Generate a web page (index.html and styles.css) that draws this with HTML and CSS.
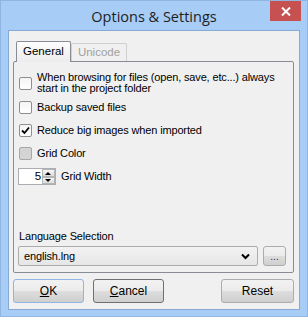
FILE: index.html
```html
<!DOCTYPE html>
<html>
<head>
<meta charset="utf-8">
<link rel="stylesheet" href="styles.css">
</head>
<body>
<div class="window">
  <div class="titlebar">
    <span class="title">Options &amp; Settings</span>
    <div class="close"><svg width="10" height="9" viewBox="0 0 10 9"><path d="M1 0.5 L9 8.5 M9 0.5 L1 8.5" stroke="#fff" stroke-width="2"/></svg></div>
  </div>
  <div class="client">
    <div class="tabs">
      <div class="tab active">General</div>
      <div class="tab">Unicode</div>
    </div>
    <div class="panel">
      <div class="row row-two">
        <span class="cb"></span>
        <span class="label">When browsing for files (open, save, etc...) always<br>start in the project folder</span>
      </div>
      <div class="row">
        <span class="cb"></span>
        <span class="label">Backup saved files</span>
      </div>
      <div class="row">
        <span class="cb checked"><svg width="9" height="9" viewBox="0 0 9 9"><path d="M1 4.5 L3.5 7 L8 1.5" stroke="#000" stroke-width="1.8" fill="none"/></svg></span>
        <span class="label">Reduce big images when imported</span>
      </div>
      <div class="row">
        <span class="cb grayed"></span>
        <span class="label">Grid Color</span>
      </div>
      <div class="row">
        <span class="spin"><span class="spin-val">5</span><span class="spin-btns"><span class="sb up"></span><span class="sb down"></span></span></span>
        <span class="label">Grid Width</span>
      </div>
      <div class="spacer"></div>
      <div class="lang-label">Language Selection</div>
      <div class="lang-row">
        <div class="select"><span>english.lng</span><svg width="9" height="7" viewBox="0 0 9 7"><path d="M1 1.5 L4.5 5 L8 1.5" stroke="#000" stroke-width="2" fill="none"/></svg></div>
        <div class="btn small">...</div>
      </div>
    </div>
    <div class="buttons">
      <div class="btn ok"><u>O</u>K</div>
      <div class="btn cancel"><u>C</u>ancel</div>
      <div class="grow"></div>
      <div class="btn reset">Reset</div>
    </div>
  </div>
</div>
</body>
</html>
```
FILE: styles.css
```css
* { box-sizing: border-box; }
html, body { margin: 0; padding: 0; }
body { width: 308px; height: 317px; overflow: hidden; background: #a7cdf6; }
.window { width: 308px; height: 317px; background: #a7cdf6; display: flex; flex-direction: column; border: 1px solid #8fb5e0; }
.titlebar { height: 29px; position: relative; display: flex; justify-content: center; align-items: center; }
.title { font-family: "Open Sans", sans-serif; font-size: 14.5px; color: #1e1e1e; margin-top: 1px; }
.close { position: absolute; right: 6px; top: 0; width: 31px; height: 20px; background: #c75050; display: flex; align-items: center; justify-content: center; }
.client { margin: 0 7px; height: 280px; background: #f0f0f0; border: 1px solid #86a9d4; padding: 10px 5px 0 4px; display: flex; flex-direction: column; font-family: "Liberation Sans", sans-serif; font-size: 11px; color: #000; }
.tabs { display: flex; height: 21px; padding-left: 3px; position: relative; z-index: 1; }
.tab { height: 18px; margin-top: 2px; padding: 0 6px; border: 1px solid #d0d0d0; border-bottom: none; border-radius: 2px 2px 0 0; color: #a0a0a0; font-size: 11.5px; line-height: 17px; background: #f0f0f0; }
.tab.active { height: 21px; margin-top: 0; color: #000; border-color: #898c95; background: linear-gradient(#fdfdfd, #ececec); line-height: 19px; }
.panel { height: 212px; margin-top: -1px; border: 1px solid #898c95; border-radius: 2px; padding: 9px 0 6px 5px; display: flex; flex-direction: column; font-size: 11px; letter-spacing: -0.15px; }
.row { display: flex; align-items: center; height: 23px; white-space: nowrap; }
.row-two { height: 24px; margin-bottom: 1px; }
.label { line-height: 11px; margin-left: 5px; }
.cb { width: 13px; height: 13px; border: 1px solid #8f8f8f; border-radius: 2px; background: linear-gradient(#f4f4f4, #ffffff); display: flex; align-items: center; justify-content: center; flex: none; }
.cb.grayed { background: #d4d4d4; border-color: #a8a8a8; }
.spin { width: 38px; height: 17px; border: 1px solid #abadb3; background: #fff; display: flex; margin-left: -1px; font-size: 11.5px; }
.spin-val { flex: 1; text-align: right; padding-right: 1px; line-height: 15px; }
.spin-btns { width: 13px; display: flex; flex-direction: column; }
.sb { flex: 1; background: linear-gradient(#f6f6f6, #dcdcdc); border: 1px solid #b5b5b5; position: relative; }
.sb.up::after { content: ""; position: absolute; left: 2px; top: 2px; border-left: 3px solid transparent; border-right: 3px solid transparent; border-bottom: 3px solid #000; }
.sb.down::after { content: ""; position: absolute; left: 2px; top: 1px; border-left: 3px solid transparent; border-right: 3px solid transparent; border-top: 3px solid #000; }
.spin + .label { margin-left: 5px; }
.spacer { flex: 1; }
.lang-label { margin-bottom: 3px; line-height: 13px; }
.lang-row { display: flex; align-items: center; gap: 5px; margin-left: -1px; }
.select { width: 240px; height: 20px; border: 1px solid #acacac; border-radius: 2px; background: linear-gradient(#f2f2f2, #e6e6e6); display: flex; align-items: center; justify-content: space-between; padding: 0 7px 0 5px; }
.btn { border: 1px solid #acacac; border-radius: 3px; background: linear-gradient(#f2f2f2 0%, #ebebeb 50%, #dddddd 51%, #cfcfcf 100%); display: flex; align-items: center; justify-content: center; font-size: 12px; letter-spacing: 0; }
.btn.small { width: 23px; height: 20px; font-size: 10px; color: #333; }
.buttons { display: flex; margin-top: 6px; gap: 9px; }
.buttons .btn { width: 71px; height: 24px; }
.btn.ok { border-color: #8fb4e6; }
.btn.cancel { border-color: #707070; }
.btn.reset { width: 73px; }
.grow { flex: 1; }
```
